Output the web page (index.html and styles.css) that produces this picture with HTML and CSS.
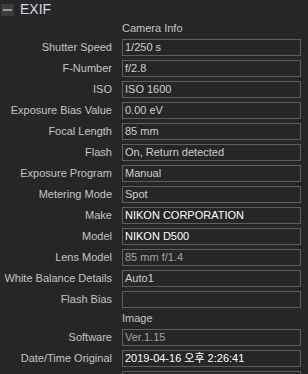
FILE: index.html
```html
<!DOCTYPE html>
<html>
<head>
<meta charset="utf-8">
<link rel="stylesheet" href="styles.css">
</head>
<body>
<div class="panel">
  <div class="header">
    <span class="toggle"><span class="minus"></span></span>
    <span class="title">EXIF</span>
  </div>
  <div class="section">Camera Info</div>
  <div class="row"><span class="label">Shutter Speed</span><span class="box">1/250 s</span></div>
  <div class="row"><span class="label">F-Number</span><span class="box">f/2.8</span></div>
  <div class="row"><span class="label">ISO</span><span class="box">ISO 1600</span></div>
  <div class="row"><span class="label">Exposure Bias Value</span><span class="box">0.00 eV</span></div>
  <div class="row"><span class="label">Focal Length</span><span class="box">85 mm</span></div>
  <div class="row"><span class="label">Flash</span><span class="box">On, Return detected</span></div>
  <div class="row"><span class="label">Exposure Program</span><span class="box">Manual</span></div>
  <div class="row"><span class="label">Metering Mode</span><span class="box">Spot</span></div>
  <div class="row"><span class="label">Make</span><span class="box bright">NIKON CORPORATION</span></div>
  <div class="row"><span class="label">Model</span><span class="box bright">NIKON D500</span></div>
  <div class="row"><span class="label">Lens Model</span><span class="box dim">85 mm f/1.4</span></div>
  <div class="row"><span class="label">White Balance Details</span><span class="box">Auto1</span></div>
  <div class="row"><span class="label">Flash Bias</span><span class="box"></span></div>
  <div class="section">Image</div>
  <div class="row"><span class="label">Software</span><span class="box dim">Ver.1.15</span></div>
  <div class="row"><span class="label">Date/Time Original</span><span class="box bright">2019-04-16 오후 2:26:41</span></div>
  <div class="row"><span class="label"></span><span class="box"></span></div>
</div>
</body>
</html>
```
FILE: styles.css
```css
html, body {
  margin: 0;
  padding: 0;
  background: #262626;
  overflow: hidden;
}
body {
  width: 308px;
  height: 374px;
  font-family: "Liberation Sans", "Noto Sans CJK KR", sans-serif;
  font-size: 11px;
  color: #c4c4c4;
}
.panel {
  display: flex;
  flex-direction: column;
}
.header {
  height: 18px;
  display: flex;
  align-items: center;
  gap: 6px;
  padding-left: 1px;
}
.toggle {
  width: 13px;
  height: 12px;
  background: #3c3c3c;
  display: flex;
  align-items: center;
  justify-content: center;
  margin-top: 1px;
}
.minus {
  width: 9px;
  height: 2px;
  background: #9a9a9a;
}
.title {
  font-size: 14px;
  color: #d6dde4;
  line-height: 18px;
}
.section {
  height: 21px;
  line-height: 21px;
  padding-left: 122px;
}
.row {
  display: flex;
  height: 17px;
  gap: 10px;
}
.row + .row {
  margin-top: 4px;
}
.label {
  width: 112px;
  text-align: right;
  line-height: 17px;
  white-space: nowrap;
}
.box {
  box-sizing: border-box;
  width: 179px;
  height: 17px;
  border: 1px solid #5e5e5e;
  padding-left: 2px;
  line-height: 15px;
  color: #cfcfcf;
  white-space: nowrap;
}
.box.bright {
  color: #ffffff;
}
.box.dim {
  color: #a4a4a4;
}
```
